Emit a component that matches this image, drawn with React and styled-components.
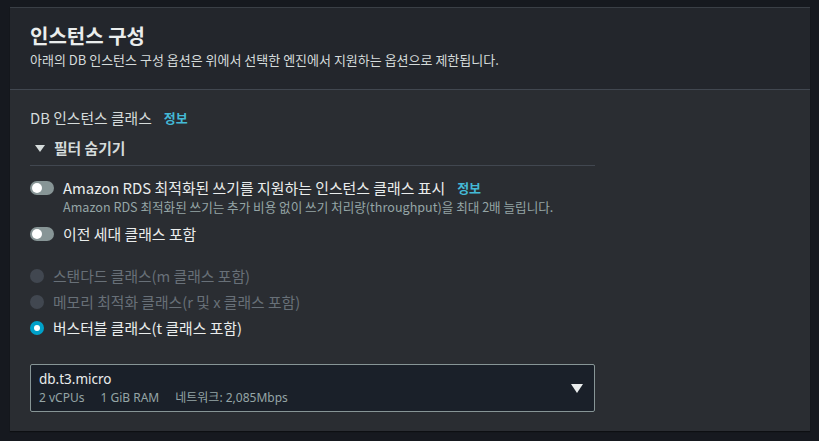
import React from "react";
import styled, { createGlobalStyle } from "styled-components";

const Global = createGlobalStyle`
  html, body { margin: 0; padding: 0; background: #16191f; }
  body { font-family: "Noto Sans", "Noto Sans CJK KR", sans-serif; color: #d5dbdb; }
`;

const Page = styled.div`
  padding: 7px 9px 11px 10px;
  width: 800px;
`;

const Panel = styled.section`
  background: #2a2d32;
  border-top: 1px solid #3a3f46;
  box-shadow: 0 1px 1px rgba(0,0,0,0.4);
`;

const Header = styled.header`
  background: #23262c;
  padding: 15px 20px 18px;
  border-bottom: 1px solid #414750;
`;

const Title = styled.h2`
  margin: 0;
  font-size: 20px;
  font-weight: 700;
  line-height: 26px;
  color: #eaeded;
  font-family: "Noto Sans CJK KR", sans-serif;
`;

const Subtitle = styled.p`
  margin: 0;
  font-size: 13px;
  line-height: 22px;
  color: #d5dbdb;
  font-family: "Noto Sans CJK KR", sans-serif;
`;

const Body = styled.div`
  padding: 18px 20px 19px;
`;

const LabelRow = styled.div`
  display: flex;
  align-items: center;
  gap: 12px;
  font-size: 14.8px;
  line-height: 20px;
  font-family: "Noto Sans CJK KR", sans-serif;
`;

const Info = styled.span`
  color: #44b9d6;
  font-weight: 700;
  font-size: 13px;
`;

const FilterHeader = styled.div`
  width: 565px;
  box-sizing: border-box;
  display: flex;
  align-items: center;
  gap: 9px;
  margin-top: 10px;
  padding: 0 0 7px 5px;
  border-bottom: 1px solid #414750;
  font-size: 14.8px;
  font-weight: 700;
  line-height: 20px;
  font-family: "Noto Sans CJK KR", sans-serif;
`;

const Caret = styled.span`
  width: 0;
  height: 0;
  border-left: 5px solid transparent;
  border-right: 5px solid transparent;
  border-top: 7px solid #d5dbdb;
`;

const ToggleRow = styled.div`
  display: flex;
  align-items: flex-start;
  gap: 9px;
  margin-top: ${(p) => p.$mt}px;
`;

const Toggle = styled.span`
  flex: none;
  width: 24px;
  height: 14px;
  margin-top: 3px;
  border-radius: 7px;
  background: #879596;
  position: relative;
  &::after {
    content: "";
    position: absolute;
    left: 2px;
    top: 2px;
    width: 10px;
    height: 10px;
    border-radius: 50%;
    background: #ffffff;
  }
`;

const ToggleText = styled.div`
  display: flex;
  flex-direction: column;
`;

const ToggleLabel = styled.div`
  display: flex;
  align-items: center;
  gap: 12px;
  font-size: 14.9px;
  line-height: 20px;
  color: #eaeded;
  font-family: "Noto Sans CJK KR", sans-serif;
`;

const Desc = styled.div`
  font-size: 12.6px;
  line-height: 17px;
  color: #95a5a6;
  font-family: "Noto Sans CJK KR", sans-serif;
`;

const RadioGroup = styled.div`
  display: flex;
  flex-direction: column;
  gap: 5px;
  margin-top: 21px;
`;

const RadioRow = styled.div`
  display: flex;
  align-items: center;
  gap: 9px;
  font-size: 14.8px;
  line-height: 21px;
  color: ${(p) => (p.$disabled ? "#687078" : "#eaeded")};
  font-family: "Noto Sans CJK KR", sans-serif;
`;

const Radio = styled.span`
  flex: none;
  width: 14px;
  height: 14px;
  border-radius: 50%;
  background: ${(p) => (p.$checked ? "#00a1c9" : "#414750")};
  display: flex;
  align-items: center;
  justify-content: center;
  &::after {
    content: "";
    display: ${(p) => (p.$checked ? "block" : "none")};
    width: 6px;
    height: 6px;
    border-radius: 50%;
    background: #ffffff;
  }
`;

const Select = styled.div`
  margin-top: 26px;
  width: 565px;
  box-sizing: border-box;
  height: 48px;
  background: #1a2029;
  border: 1px solid #879596;
  border-radius: 2px;
  display: flex;
  align-items: center;
  justify-content: space-between;
  padding: 0 11px 0 8px;
`;

const SelectText = styled.div`
  display: flex;
  flex-direction: column;
`;

const SelectValue = styled.div`
  font-size: 13.5px;
  line-height: 19px;
  color: #eaeded;
`;

const SelectMeta = styled.div`
  display: flex;
  gap: 16px;
  font-size: 12px;
  line-height: 18px;
  color: #95a5a6;
  font-family: "Noto Sans", "Noto Sans CJK KR", sans-serif;
`;

const SelectCaret = styled.span`
  width: 0;
  height: 0;
  border-left: 6px solid transparent;
  border-right: 6px solid transparent;
  border-top: 9px solid #eaeded;
`;

export default function App() {
  return (
    <>
      <Global />
      <Page>
        <Panel>
          <Header>
            <Title>인스턴스 구성</Title>
            <Subtitle>아래의 DB 인스턴스 구성 옵션은 위에서 선택한 엔진에서 지원하는 옵션으로 제한됩니다.</Subtitle>
          </Header>
          <Body>
            <LabelRow>
              DB 인스턴스 클래스 <Info>정보</Info>
            </LabelRow>
            <FilterHeader>
              <Caret />
              필터 숨기기
            </FilterHeader>
            <ToggleRow $mt={12}>
              <Toggle />
              <ToggleText>
                <ToggleLabel>
                  Amazon RDS 최적화된 쓰기를 지원하는 인스턴스 클래스 표시 <Info>정보</Info>
                </ToggleLabel>
                <Desc>Amazon RDS 최적화된 쓰기는 추가 비용 없이 쓰기 처리량(throughput)을 최대 2배 늘립니다.</Desc>
              </ToggleText>
            </ToggleRow>
            <ToggleRow $mt={9}>
              <Toggle />
              <ToggleLabel>이전 세대 클래스 포함</ToggleLabel>
            </ToggleRow>
            <RadioGroup>
              <RadioRow $disabled>
                <Radio />
                스탠다드 클래스(m 클래스 포함)
              </RadioRow>
              <RadioRow $disabled>
                <Radio />
                메모리 최적화 클래스(r 및 x 클래스 포함)
              </RadioRow>
              <RadioRow>
                <Radio $checked />
                버스터블 클래스(t 클래스 포함)
              </RadioRow>
            </RadioGroup>
            <Select>
              <SelectText>
                <SelectValue>db.t3.micro</SelectValue>
                <SelectMeta>
                  <span>2 vCPUs</span>
                  <span>1 GiB RAM</span>
                  <span>네트워크: 2,085Mbps</span>
                </SelectMeta>
              </SelectText>
              <SelectCaret />
            </Select>
          </Body>
        </Panel>
      </Page>
    </>
  );
}
